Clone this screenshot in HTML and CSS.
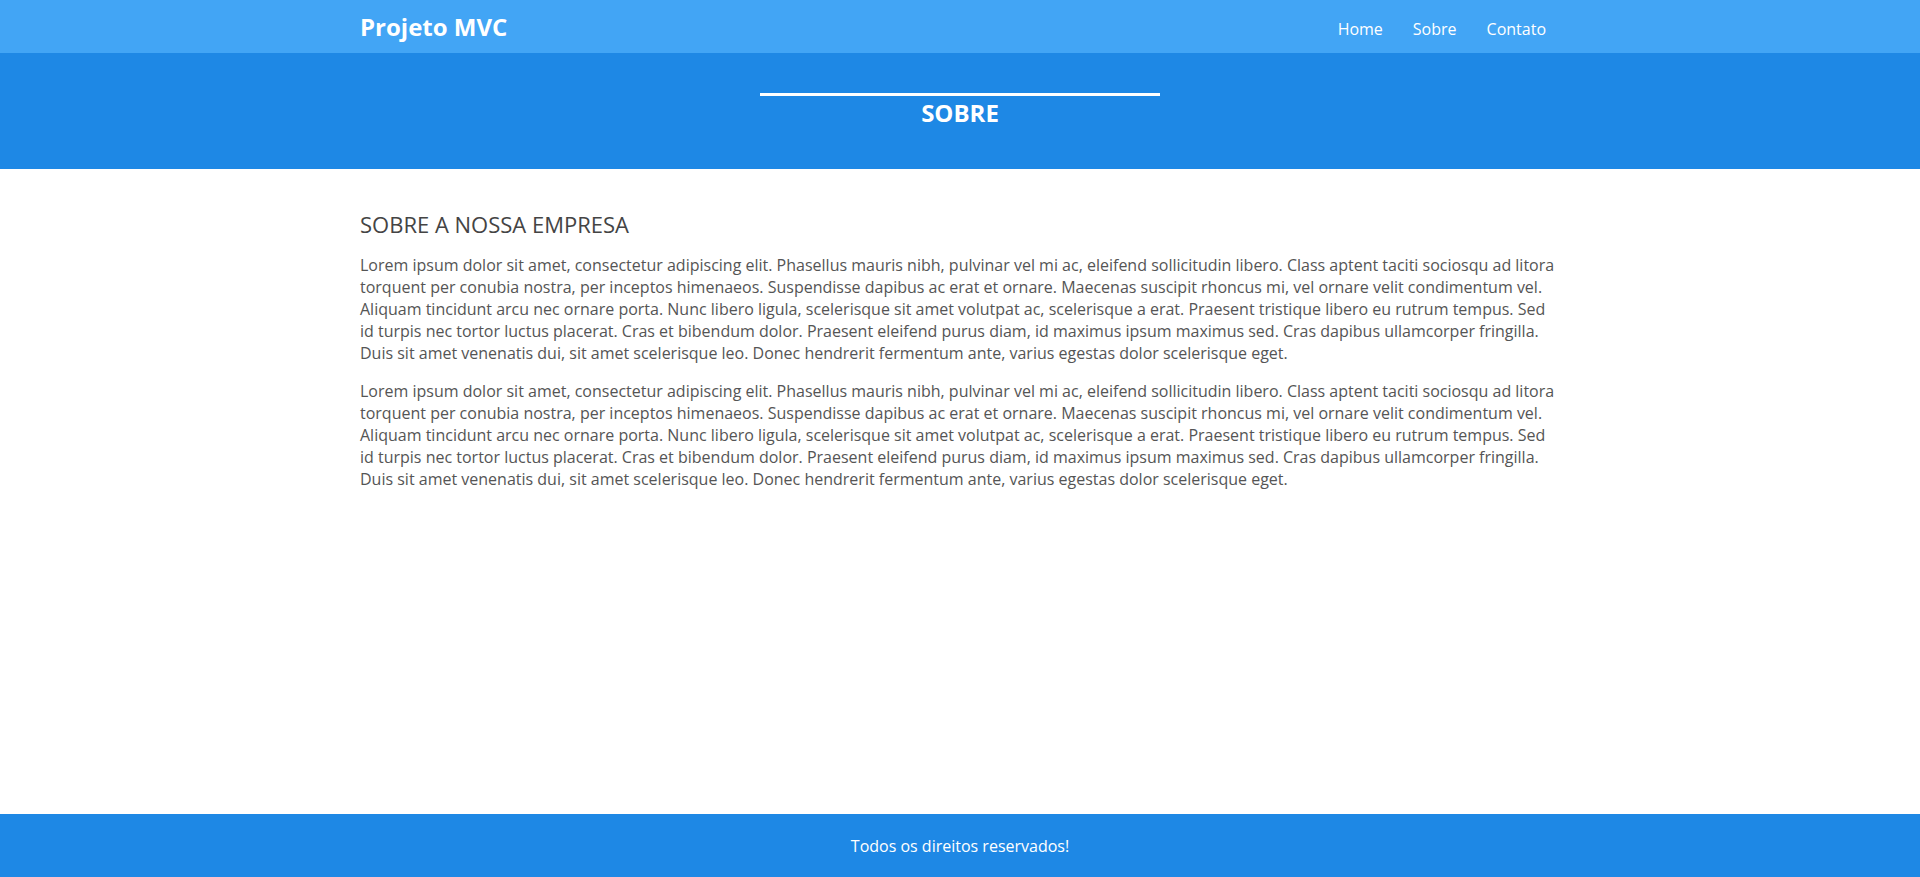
FILE: index.html
```html
<!DOCTYPE html>
<html lang="pt-BR">
<head>
<meta charset="utf-8">
<title>Projeto MVC - Sobre</title>
<link rel="stylesheet" href="styles.css">
</head>
<body>
<div class="page">
  <header class="topbar">
    <div class="container topbar-inner">
      <a class="brand" href="#">Projeto MVC</a>
      <nav class="nav">
        <a href="#">Home</a>
        <a href="#">Sobre</a>
        <a href="#">Contato</a>
      </nav>
    </div>
  </header>
  <section class="banner">
    <div class="banner-line"></div>
    <h1 class="banner-title">SOBRE</h1>
  </section>
  <main class="content">
    <div class="container">
      <h2 class="section-title">SOBRE A NOSSA EMPRESA</h2>
      <p>Lorem ipsum dolor sit amet, consectetur adipiscing elit. Phasellus mauris nibh, pulvinar vel mi ac, eleifend sollicitudin libero. Class aptent taciti sociosqu ad litora torquent per conubia nostra, per inceptos himenaeos. Suspendisse dapibus ac erat et ornare. Maecenas suscipit rhoncus mi, vel ornare velit condimentum vel. Aliquam tincidunt arcu nec ornare porta. Nunc libero ligula, scelerisque sit amet volutpat ac, scelerisque a erat. Praesent tristique libero eu rutrum tempus. Sed id turpis nec tortor luctus placerat. Cras et bibendum dolor. Praesent eleifend purus diam, id maximus ipsum maximus sed. Cras dapibus ullamcorper fringilla. Duis sit amet venenatis dui, sit amet scelerisque leo. Donec hendrerit fermentum ante, varius egestas dolor scelerisque eget.</p>
      <p>Lorem ipsum dolor sit amet, consectetur adipiscing elit. Phasellus mauris nibh, pulvinar vel mi ac, eleifend sollicitudin libero. Class aptent taciti sociosqu ad litora torquent per conubia nostra, per inceptos himenaeos. Suspendisse dapibus ac erat et ornare. Maecenas suscipit rhoncus mi, vel ornare velit condimentum vel. Aliquam tincidunt arcu nec ornare porta. Nunc libero ligula, scelerisque sit amet volutpat ac, scelerisque a erat. Praesent tristique libero eu rutrum tempus. Sed id turpis nec tortor luctus placerat. Cras et bibendum dolor. Praesent eleifend purus diam, id maximus ipsum maximus sed. Cras dapibus ullamcorper fringilla. Duis sit amet venenatis dui, sit amet scelerisque leo. Donec hendrerit fermentum ante, varius egestas dolor scelerisque eget.</p>
    </div>
  </main>
  <footer class="footer">Todos os direitos reservados!</footer>
</div>
</body>
</html>
```

FILE: styles.css
```css
* { box-sizing: border-box; }

html, body {
  margin: 0;
  padding: 0;
}

body {
  font-family: "Open Sans", "Noto Sans", sans-serif;
  font-size: 16px;
  color: #555;
  background: #fff;
}

.page {
  min-height: 100vh;
  display: flex;
  flex-direction: column;
}

.container {
  width: 1200px;
  margin: 0 auto;
}

.topbar {
  background: #42a5f5;
  height: 53px;
}

.topbar-inner {
  height: 100%;
  display: flex;
  align-items: center;
  justify-content: space-between;
}

.brand {
  color: #fff;
  font-weight: 700;
  font-size: 24px;
  text-decoration: none;
}

.nav {
  display: flex;
  padding-top: 4px;
  margin-right: -1px;
}

.nav a {
  color: #fff;
  text-decoration: none;
  padding: 0 15px;
}

.banner {
  background: #1e88e5;
  padding: 40px 0;
  display: flex;
  flex-direction: column;
  align-items: center;
}

.banner-line {
  width: 400px;
  height: 3px;
  background: #fff;
}

.banner-title {
  margin: 0;
  color: #fff;
  font-size: 24px;
  font-weight: 700;
}

.content {
  flex: 1;
  padding-top: 40px;
  padding-bottom: 20px;
}

.section-title {
  margin: 0 0 15px;
  font-size: 22px;
  font-weight: 400;
  color: #444;
}

.content p {
  margin: 0 0 16px;
}

.footer {
  background: #1e88e5;
  color: #fff;
  height: 63px;
  display: flex;
  align-items: center;
  justify-content: center;
}
```
